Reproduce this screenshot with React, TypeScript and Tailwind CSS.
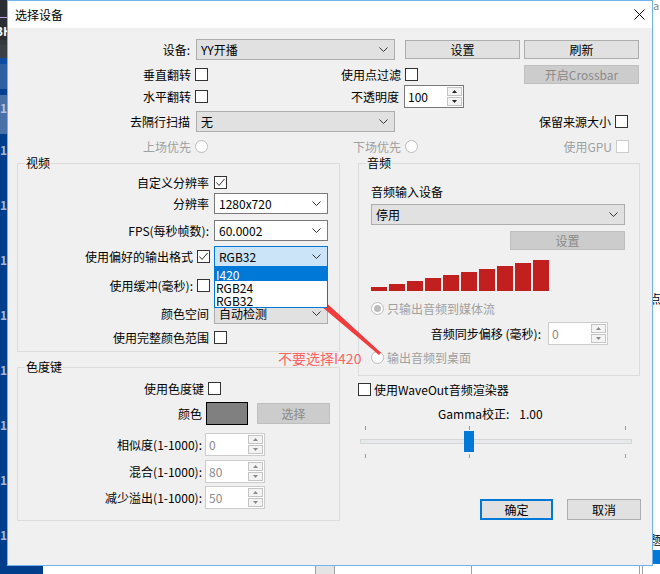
import React from 'react';

type Kids = { children?: React.ReactNode };

function Chevron() {
  return (
    <svg width="9" height="5" viewBox="0 0 9 5" className="shrink-0">
      <polyline points="0.5,0.5 4.5,4.5 8.5,0.5" fill="none" stroke="#333" strokeWidth="1" />
    </svg>
  );
}

function Check({ checked = false, disabled = false }: { checked?: boolean; disabled?: boolean }) {
  return (
    <span
      className={`flex h-[13px] w-[13px] shrink-0 items-center justify-center border bg-white ${
        disabled ? 'border-[#cccccc]' : 'border-[#333333]'
      }`}
    >
      {checked && (
        <svg width="11" height="11" viewBox="0 0 11 11">
          <polyline points="1.5,5.5 4,8.5 9.5,2" fill="none" stroke="#333" strokeWidth="1" />
        </svg>
      )}
    </span>
  );
}

function Radio({ checked = false }: { checked?: boolean }) {
  return (
    <span className="flex h-[13px] w-[13px] shrink-0 items-center justify-center rounded-full border border-[#bcbcbc] bg-white">
      {checked && <span className="h-[7px] w-[7px] rounded-full bg-[#bcbcbc]" />}
    </span>
  );
}

function Combo({
  value,
  className = '',
  variant = 'gray',
}: {
  value: string;
  className?: string;
  variant?: 'gray' | 'white' | 'focus';
}) {
  const tone =
    variant === 'white'
      ? 'bg-white border-[#7a7a7a]'
      : variant === 'focus'
      ? 'bg-[#cce4f7] border-[#0078d7]'
      : 'bg-[#e1e1e1] border-[#adadad]';
  return (
    <div className={`flex h-[21px] shrink-0 items-center justify-between border pl-[4px] pr-[6px] ${tone} ${className}`}>
      <span className="leading-[14px]">{value}</span>
      <Chevron />
    </div>
  );
}

function Btn({
  label,
  className = '',
  disabled = false,
  primary = false,
}: {
  label: string;
  className?: string;
  disabled?: boolean;
  primary?: boolean;
}) {
  const tone = disabled
    ? 'bg-[#cccccc] border border-[#bfbfbf] text-[#8a8a8a]'
    : primary
    ? 'bg-[#e1e1e1] border-2 border-[#0078d7]'
    : 'bg-[#e1e1e1] border border-[#adadad]';
  return (
    <div className={`flex shrink-0 items-center justify-center leading-[14px] ${tone} ${className}`}>{label}</div>
  );
}

function Spin({ value, disabled = false }: { value: string; disabled?: boolean }) {
  const arrow = disabled ? '#8a8a8a' : '#222';
  return (
    <div
      className={`flex h-[23px] w-[60px] shrink-0 border bg-white ${
        disabled ? 'border-[#cccccc] text-[#8a8a8a]' : 'border-[#7a7a7a]'
      }`}
    >
      <span className="flex flex-1 items-center pl-[3px] leading-[14px]">{value}</span>
      <div className="flex w-[17px] flex-col gap-[1px] bg-white p-[1px]">
        <span className="flex flex-1 items-center justify-center border border-[#c4c4c4] bg-[#f3f3f3]">
          <svg width="5" height="3" viewBox="0 0 5 3">
            <polygon points="0,3 2.5,0 5,3" fill={arrow} />
          </svg>
        </span>
        <span className="flex flex-1 items-center justify-center border border-[#c4c4c4] bg-[#f3f3f3]">
          <svg width="5" height="3" viewBox="0 0 5 3">
            <polygon points="0,0 5,0 2.5,3" fill={arrow} />
          </svg>
        </span>
      </div>
    </div>
  );
}

function Label({ children, className = '', disabled = false }: Kids & { className?: string; disabled?: boolean }) {
  return (
    <span className={`shrink-0 whitespace-nowrap text-right leading-[14px] ${disabled ? 'text-[#a0a0a0]' : ''} ${className}`}>
      {children}
    </span>
  );
}

const barHeights = ['h-[4px]', 'h-[7px]', 'h-[10px]', 'h-[13px]', 'h-[16px]', 'h-[19px]', 'h-[22px]', 'h-[25px]', 'h-[28px]', 'h-[31px]'];

function Backdrop() {
  return (
    <>
      {/* app behind the dialog, left edge */}
      <div className="flex w-[43px] shrink-0 flex-col font-bold text-[12px]">
        <div className="h-[21px] bg-[#2a2d31]" />
        <div className="h-[2px] bg-[#c49be6]" />
        <div className="h-[5px] bg-[#2a2d31]" />
        <div className="h-[18px] bg-[#2a2d31] text-white leading-[18px] -ml-[4px]">3H</div>
        <div className="h-[6px] bg-[#35393e]" />
        <div className="h-[16px] bg-[#3b4046]" />
        <div className="h-[8px] bg-[#0e4ca3]" />
        <div className="h-[31px] bg-[#2f5fa3]" />
        <div className="h-[7px] bg-[#063f8f]" />
        <div className="h-[48px] bg-[#4a70a8] pt-[6px] leading-[14px] text-[#b4c2d8]">19</div>
        <div className="flex flex-1 flex-col bg-[#003e8c] text-[#a9b8cf]">
          {[0, 1, 2, 3, 4, 5, 6, 7].map((i) => (
            <div key={i} className="h-[55px] shrink-0 pt-[9px] leading-[14px]">19</div>
          ))}
        </div>
      </div>

      <div className="flex flex-1 flex-col bg-white">
        <div className="flex-1" />
        <div className="flex h-[8px]">
          <div className="w-[272px]" />
          <div className="w-[20px] border-x border-[#a0a0a0] bg-[#e4e4e4]" />
          <div className="w-[136px]" />
          <div className="w-[1px] bg-[#a0a0a0]" />
          <div className="w-[167px]" />
          <div className="w-[1px] bg-[#a0a0a0]" />
          <div className="w-[2px]" />
          <div className="w-[1px] bg-[#a0a0a0]" />
        </div>
      </div>

      <div className="flex w-[8px] shrink-0 flex-col bg-white">
        <div className="h-[10px] pl-[1px] text-[11px] leading-[10px] text-[#888]">a</div>
        <div className="h-[282px]" />
        <div className="h-[14px] -ml-[3px] leading-[14px]">点</div>
        <div className="h-[227px]" />
        <div className="h-[14px] -ml-[3px] leading-[14px]">题</div>
        <div className="h-[3px]" />
        <div className="ml-[1px] h-[14px] bg-[#0078d7]" />
      </div>
    </>
  );
}

export default function App() {
  return (
    <div className="relative flex h-[574px] w-[660px] overflow-hidden bg-white font-['Noto_Sans_CJK_SC',sans-serif] text-[12px] text-black">
      <Backdrop />

      {/* DIALOG */}
      <div className="absolute left-[7px] top-0 flex h-[566px] w-[646px] flex-col border border-[#71b1ec] bg-[#f0f0f0]">
        {/* title bar */}
        <div className="flex h-[27px] shrink-0 items-center justify-between bg-white pl-[7px] pr-[7px]">
          <span className="leading-[14px]">选择设备</span>
          <svg width="11" height="11" viewBox="0 0 11 11">
            <path d="M0.5 0.5 L10.5 10.5 M10.5 0.5 L0.5 10.5" stroke="#000" strokeWidth="1" />
          </svg>
        </div>

        {/* top rows */}
        <div className="mt-[11px] flex h-[21px] items-center">
          <Label className="w-[184px] pr-[2px]">设备:</Label>
          <Combo value="YY开播" className="ml-[4px] w-[199px]" />
          <Btn label="设置" className="ml-[10px] h-[19px] w-[115px]" />
          <Btn label="刷新" className="ml-[4px] h-[19px] w-[115px]" />
        </div>

        <div className="mt-[5px] flex h-[19px] items-center">
          <Label className="w-[185px] pr-[2px]">垂直翻转</Label>
          <span className="ml-[2px]"><Check /></span>
          <Label className="w-[194px] pr-[1px]">使用点过滤</Label>
          <span className="ml-[3px]"><Check /></span>
          <Btn label="开启Crossbar" disabled className="ml-[106px] h-[19px] w-[115px]" />
        </div>

        <div className="mt-[1px] flex h-[23px] items-center">
          <Label className="w-[185px] pr-[2px]">水平翻转</Label>
          <span className="ml-[2px]"><Check /></span>
          <Label className="w-[193px] pr-[2px]">不透明度</Label>
          <span className="ml-[3px]"><Spin value="100" /></span>
        </div>

        <div className="mt-[3px] flex h-[21px] items-center">
          <Label className="w-[184px] pr-[2px]">去隔行扫描</Label>
          <Combo value="无" className="ml-[4px] w-[199px]" />
          <Label className="w-[218px] pr-[2px]">保留来源大小</Label>
          <span className="ml-[2px]"><Check /></span>
        </div>

        <div className="mt-[5px] flex h-[19px] items-center">
          <Label disabled className="w-[185px] pr-[2px]">上场优先</Label>
          <span className="ml-[2px]"><Radio /></span>
          <Label disabled className="w-[194px] pr-[1px]">下场优先</Label>
          <span className="ml-[3px]"><Radio /></span>
          <Label disabled className="w-[196px] pr-[2px]">使用GPU</Label>
          <span className="ml-[2px]"><Check disabled /></span>
        </div>

        {/* main area */}
        <div className="ml-[9px] flex">
          {/* left column */}
          <div className="flex w-[323px] shrink-0 flex-col">
            <fieldset className="h-[196px] w-[323px] border border-[#dcdcdc]">
              <legend className="ml-[7px] px-[1px] leading-[14px]">视频</legend>
              <div className="flex flex-col">
                <div className="mt-[6px] flex h-[13px] items-center">
                  <Label className="w-[192px] pr-[1px]">自定义分辨率</Label>
                  <span className="ml-[4px]"><Check checked /></span>
                </div>
                <div className="mt-[4px] flex h-[21px] items-center">
                  <Label className="w-[192px] pr-[1px]">分辨率</Label>
                  <Combo value="1280x720" variant="white" className="ml-[4px] w-[114px]" />
                </div>
                <div className="mt-[6px] flex h-[21px] items-center">
                  <Label className="w-[192px] pr-[1px]">FPS(每秒帧数):</Label>
                  <Combo value="60.0002" variant="white" className="ml-[4px] w-[114px]" />
                </div>
                <div className="mt-[5px] flex h-[21px] items-center">
                  <Label className="w-[176px] pr-[1px]">使用偏好的输出格式</Label>
                  <span className="ml-[3px]"><Check checked /></span>
                  <div className="relative ml-[4px]">
                    <Combo value="RGB32" variant="focus" className="w-[114px]" />
                    <div className="absolute left-0 top-[21px] z-10 w-[114px] border border-[#0078d7] bg-white">
                      <div className="h-[13px] bg-[#0078d7] pl-[1px] leading-[13px] text-white">I420</div>
                      <div className="h-[13px] pl-[1px] leading-[13px]">RGB24</div>
                      <div className="h-[13px] pl-[1px] leading-[13px]">RGB32</div>
                    </div>
                  </div>
                </div>
                <div className="mt-[8px] flex h-[21px] items-center">
                  <Label className="w-[176px] pr-[1px]">使用缓冲(毫秒):</Label>
                  <span className="ml-[3px]"><Check /></span>
                </div>
                <div className="mt-[7px] flex h-[21px] items-center">
                  <Label className="w-[192px] pr-[1px]">颜色空间</Label>
                  <Combo value="自动检测" className="ml-[4px] w-[114px]" />
                </div>
                <div className="mt-[7px] flex h-[13px] items-center">
                  <Label className="w-[192px] pr-[1px]">使用完整颜色范围</Label>
                  <span className="ml-[4px]"><Check /></span>
                </div>
              </div>
            </fieldset>

            <fieldset className="mt-[8px] h-[161px] w-[323px] border border-[#dcdcdc]">
              <legend className="ml-[7px] px-[1px] leading-[14px]">色度键</legend>
              <div className="flex flex-col">
                <div className="mt-[8px] flex h-[13px] items-center">
                  <Label className="w-[187px] pr-[1px]">使用色度键</Label>
                  <span className="ml-[3px]"><Check /></span>
                </div>
                <div className="mt-[7px] flex h-[23px] items-center">
                  <Label className="w-[186px] pr-[2px]">颜色</Label>
                  <div className="ml-[2px] h-[23px] w-[42px] border border-black bg-[#808080]" />
                  <Btn label="选择" disabled className="ml-[9px] h-[21px] w-[73px]" />
                </div>
                <div className="mt-[8px] flex h-[23px] items-center">
                  <Label className="w-[185px] pr-[1px]">相似度(1-1000):</Label>
                  <span className="ml-[2px]"><Spin value="0" disabled /></span>
                </div>
                <div className="mt-[4px] flex h-[23px] items-center">
                  <Label className="w-[185px] pr-[1px]">混合(1-1000):</Label>
                  <span className="ml-[2px]"><Spin value="80" disabled /></span>
                </div>
                <div className="mt-[3px] flex h-[23px] items-center">
                  <Label className="w-[185px] pr-[1px]">减少溢出(1-1000):</Label>
                  <span className="ml-[2px]"><Spin value="50" disabled /></span>
                </div>
              </div>
            </fieldset>
          </div>

          {/* right column */}
          <div className="ml-[18px] flex w-[283px] shrink-0 flex-col">
            <fieldset className="h-[220px] w-[282px] border border-[#dcdcdc]">
              <legend className="ml-[7px] px-[1px] leading-[14px]">音频</legend>
              <div className="flex flex-col pl-[12px]">
                <span className="mt-[15px] leading-[14px]">音频输入设备</span>
                <Combo value="停用" className="mt-[5px] w-[254px]" />
                <Btn label="设置" disabled className="ml-[139px] mt-[6px] h-[19px] w-[115px]" />
                <div className="mt-[10px] flex h-[31px] items-end gap-[2px]">
                  {barHeights.map((h) => (
                    <div key={h} className={`w-[16px] bg-[#c1201f] ${h}`} />
                  ))}
                </div>
                <div className="mt-[11px] flex h-[13px] items-center">
                  <Radio checked />
                  <span className="ml-[3px] leading-[14px] text-[#a0a0a0]">只输出音频到媒体流</span>
                </div>
                <div className="mt-[7px] flex h-[23px] items-center">
                  <Label className="w-[174px] pr-[4px]">音频同步偏移 (毫秒):</Label>
                  <span className="ml-[3px]"><Spin value="0" disabled /></span>
                </div>
                <div className="mt-[6px] flex h-[13px] items-center">
                  <Radio />
                  <span className="ml-[3px] leading-[14px] text-[#a0a0a0]">输出音频到桌面</span>
                </div>
              </div>
            </fieldset>

            <div className="mt-[7px] flex h-[13px] items-center">
              <Check />
              <span className="ml-[3px] leading-[14px]">使用WaveOut音频渲染器</span>
            </div>

            <div className="mt-[11px] flex pl-[80px] leading-[14px]">
              <span>Gamma校正:</span>
              <span className="ml-[10px]">1.00</span>
            </div>

            <div className="relative ml-[2px] mt-[5px] h-[33px] w-[272px]">
              <div className="absolute left-[5px] top-0 h-[4px] w-[1px] bg-[#9a9a9a]" />
              <div className="absolute left-[109px] top-0 h-[4px] w-[1px] bg-[#9a9a9a]" />
              <div className="absolute left-[265px] top-0 h-[4px] w-[1px] bg-[#9a9a9a]" />
              <div className="absolute left-0 right-0 top-[13px] h-[5px] border border-[#d6d6d6] bg-[#e7eaea]" />
              <div className="absolute left-[104px] top-[5px] h-[21px] w-[10px] bg-[#0078d7]" />
              <div className="absolute left-[5px] top-[28px] h-[4px] w-[1px] bg-[#9a9a9a]" />
              <div className="absolute left-[109px] top-[28px] h-[4px] w-[1px] bg-[#9a9a9a]" />
              <div className="absolute left-[265px] top-[28px] h-[4px] w-[1px] bg-[#9a9a9a]" />
            </div>

            <div className="mt-[40px] flex">
              <Btn label="确定" primary className="ml-[122px] h-[21px] w-[73px]" />
              <Btn label="取消" className="ml-[14px] h-[21px] w-[74px]" />
            </div>
          </div>
        </div>
      </div>

      {/* annotation */}
      <span className="absolute left-[278px] top-[349px] text-[14px] leading-[18px] text-[#ff6464]">不要选择I420</span>
      <svg className="pointer-events-none absolute left-0 top-0" width="660" height="574" viewBox="0 0 660 574">
        <polygon
          points="291,276 301.3,300.8 300.8,289.1 379,355 381,352.7 305.4,283.8 317,282.6"
          fill="#f03c3c"
        />
      </svg>
    </div>
  );
}
